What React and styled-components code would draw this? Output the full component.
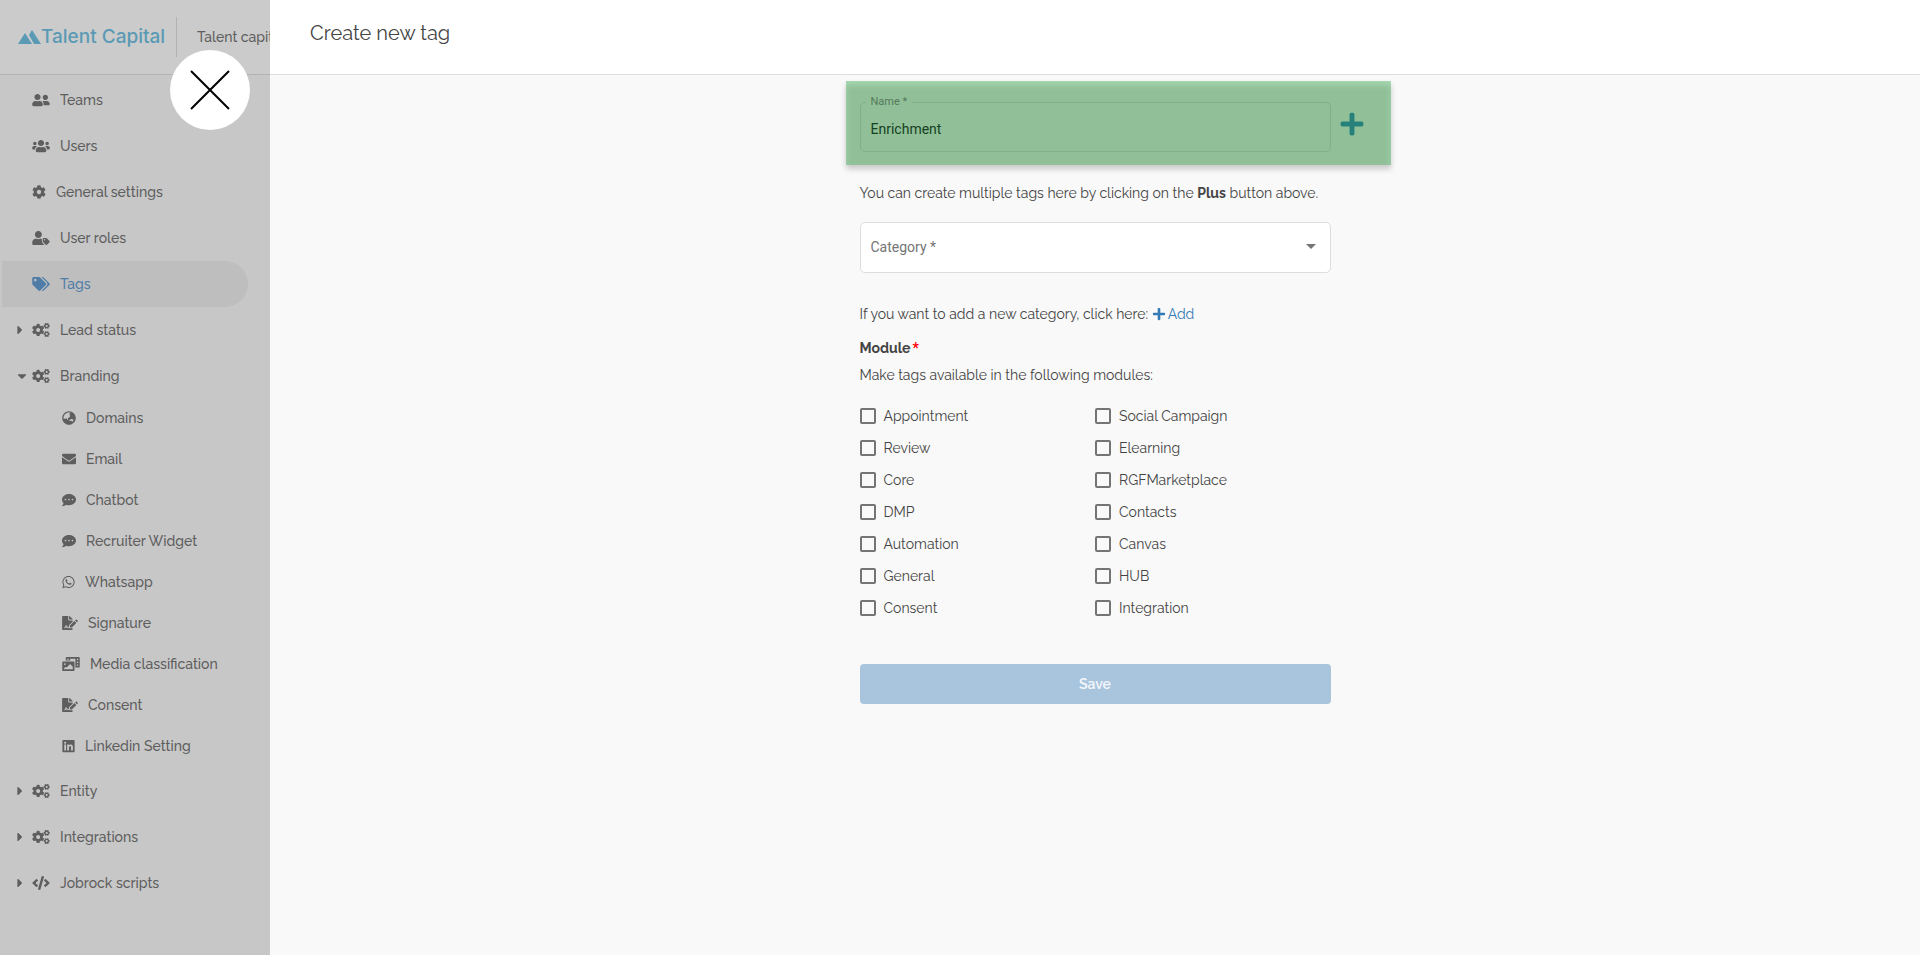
import React, { useState } from 'react';
import styled, { createGlobalStyle, css } from 'styled-components';
import {
	FaUserFriends, FaUsers, FaCog, FaUserTag, FaTags, FaCogs, FaEnvelope, FaCommentDots,
	FaWhatsapp, FaFileSignature, FaPhotoVideo, FaLinkedin, FaCode, FaGlobeAsia, FaPlus,
	FaCaretDown, FaCaretRight
} from 'react-icons/fa';

const GlobalStyle = createGlobalStyle`
	* {
		box-sizing: border-box;
	}
	body {
		margin: 0;
		background: #f9f9f9;
		color: #444;
		font-family: Raleway, Lato, sans-serif;
		font-size: 14px;
		line-height: 20px;
	}
	button, input, select {
		font: inherit;
	}
`;

const Page = styled.div`
	display: flex;
	min-height: 100vh;
`;

const Sidebar = styled.aside`
	position: relative;
	flex: 0 0 270px;
	min-width: 0;
	background: #c7c7c7;
	color: #5e5e5e;
	font-weight: 500;
`;

const TopBar = styled.div`
	display: flex;
	align-items: center;
	height: 75px;
	padding-left: 18px;
	overflow: hidden;
	white-space: nowrap;
	background: #cbcbcb;
	border-bottom: 1px solid #b3b3b3;
`;

const Logo = styled.a`
	display: flex;
	flex: none;
	align-items: center;
	width: 158px;
	color: #5a9ab5;
	font-family: Inter, sans-serif;
	font-size: 19px;
	font-weight: 500;
	text-decoration: none;
`;

const Account = styled.span`
	display: flex;
	flex: none;
	align-items: center;
	height: 40px;
	padding-left: 20px;
	border-left: 1px solid #b3b3b3;
`;

const CloseButton = styled.button`
	position: absolute;
	top: 50px;
	right: 20px;
	display: flex;
	align-items: center;
	justify-content: center;
	width: 80px;
	height: 80px;
	padding: 0;
	border: 0;
	border-radius: 50%;
	background: #fff;
	cursor: pointer;
`;

const Menu = styled.ul`
	margin: 0;
	padding: 2px 22px 0 2px;
	list-style: none;
`;

const SubMenu = styled.ul`
	margin: -2px 0 0;
	padding: 0 0 2px 60px;
	list-style: none;
`;

const MenuLink = styled.a`
	display: flex;
	align-items: center;
	height: ${({ $sub }) => ($sub ? 41 : 46)}px;
	padding-left: ${({ $sub }) => ($sub ? 0 : 15)}px;
	color: inherit;
	text-decoration: none;
	border-radius: 0 23px 23px 0;
	${({ $active }) => $active && css`
		background: #bebebe;
		color: #4f7da8;
	`}
`;

const Caret = styled.span`
	display: flex;
	width: 15px;
`;

const MenuIcon = styled.svg`
	flex: none;
	width: ${({ $width }) => $width}px;
	height: 14px;
`;

const Label = styled.span`
	margin-left: 10px;
`;

const Panel = styled.main`
	flex: 1;
	min-width: 0;
`;

const PanelHeader = styled.header`
	height: 75px;
	padding: 20px 40px;
	background: #fff;
	border-bottom: 1px solid #ddd;
`;

const Title = styled.h1`
	margin: 0;
	font-size: 20px;
	font-weight: 400;
	line-height: 26px;
`;

const Form = styled.form`
	width: 471px;
	margin: 6px auto 0;
`;

const Highlight = styled.div`
	display: flex;
	align-items: center;
	width: 545px;
	height: 84px;
	margin-left: -14px;
	padding: 2px 14px 0;
	background: #91c098;
	box-shadow: 0 4px 6px rgba(0, 0, 0, 0.2), inset 0 4px 6px -1px #aadcb5;
`;

const Field = styled.fieldset`
	flex: none;
	width: 471px;
	height: 56px;
	margin: 0;
	padding: 0 5px;
	border: 1px solid #82ae88;
	border-radius: 5px;
	font-family: Roboto, sans-serif;
`;

const FieldLegend = styled.legend`
	padding: 0 5px;
	color: #56785b;
	font-size: 11px;
	line-height: 12px;
`;

const NameInput = styled.input`
	display: block;
	width: 100%;
	height: 42px;
	padding: 0 5px;
	border: 0;
	outline: 0;
	background: transparent;
	color: #164022;
	font-size: 14px;
`;

const PlusButton = styled.button`
	display: flex;
	margin-left: 8px;
	padding: 0;
	border: 0;
	background: none;
	color: #26817a;
	font-size: 26px;
	cursor: pointer;
`;

const Hint = styled.p`
	margin: ${({ $top }) => $top || 0}px 0 0;
	white-space: nowrap;
`;

const SelectWrap = styled.div`
	position: relative;
	margin-top: 19px;
`;

const Select = styled.select`
	display: block;
	width: 100%;
	height: 51px;
	padding: 0 10px 2px;
	border: 1px solid #ddd;
	border-radius: 5px;
	appearance: none;
	background: #fff;
	color: #757575;
	font-family: Roboto, sans-serif;
	font-size: 14px;
`;

const SelectArrow = styled.svg`
	position: absolute;
	top: 22px;
	right: 15px;
	pointer-events: none;
`;

const AddLink = styled.a`
	color: #337ab7;
	text-decoration: none;

	svg {
		margin-right: 2px;
		vertical-align: -2px;
	}
`;

const ModuleTitle = styled.h2`
	margin: 14px 0 7px;
	font-size: 14px;
	font-weight: 700;
	line-height: 20px;
`;

const Required = styled.span`
	margin-left: 2px;
	color: #f00;
	font-family: Roboto, sans-serif;
`;

const Modules = styled.div`
	display: grid;
	grid-template-columns: 1fr 1fr;
	margin-top: 15px;
`;

const Check = styled.label`
	display: flex;
	align-items: center;
	gap: 8px;
	height: 32px;
`;

const CheckBox = styled.input`
	appearance: none;
	width: 16px;
	height: 16px;
	margin: 0;
	border: 2px solid #757575;
	border-radius: 2px;

	&:checked {
		background: #337ab7;
	}
`;

const SaveButton = styled.button`
	width: 100%;
	height: 40px;
	margin-top: 40px;
	border: 0;
	border-radius: 4px;
	background: #a9c5de;
	color: #f4f7fa;
	font-weight: 600;
`;

const menu = [
	{ label: 'Teams', icon: FaUserFriends, width: 18 },
	{ label: 'Users', icon: FaUsers, width: 18 },
	{ label: 'General settings', icon: FaCog, width: 14 },
	{ label: 'User roles', icon: FaUserTag, width: 18 },
	{ label: 'Tags', icon: FaTags, width: 18, active: true },
	{ label: 'Lead status', icon: FaCogs, width: 18, caret: 'right' },
	{
		label: 'Branding',
		icon: FaCogs,
		width: 18,
		caret: 'down',
		children: [
			{ label: 'Domains', icon: FaGlobeAsia, width: 14 },
			{ label: 'Email', icon: FaEnvelope, width: 14 },
			{ label: 'Chatbot', icon: FaCommentDots, width: 14 },
			{ label: 'Recruiter Widget', icon: FaCommentDots, width: 14 },
			{ label: 'Whatsapp', icon: FaWhatsapp, width: 13 },
			{ label: 'Signature', icon: FaFileSignature, width: 16 },
			{ label: 'Media classification', icon: FaPhotoVideo, width: 18 },
			{ label: 'Consent', icon: FaFileSignature, width: 16 },
			{ label: 'Linkedin Setting', icon: FaLinkedin, width: 13 }
		]
	},
	{ label: 'Entity', icon: FaCogs, width: 18, caret: 'right' },
	{ label: 'Integrations', icon: FaCogs, width: 18, caret: 'right' },
	{ label: 'Jobrock scripts', icon: FaCode, width: 18, caret: 'right' }
];

const modules = [
	'Appointment', 'Social Campaign', 'Review', 'Elearning', 'Core', 'RGFMarketplace', 'DMP',
	'Contacts', 'Automation', 'Canvas', 'General', 'HUB', 'Consent', 'Integration'
];

const MenuItem = ({ item, sub }) => (
	<li>
		<MenuLink href="#" $sub={sub} $active={item.active}>
			{!sub && (
				<Caret>
					{item.caret === 'right' && <MenuIcon as={FaCaretRight} $width={6} />}
					{item.caret === 'down' && <MenuIcon as={FaCaretDown} $width={10} />}
				</Caret>
			)}
			<MenuIcon as={item.icon} $width={item.width} />
			<Label>{item.label}</Label>
		</MenuLink>
		{item.children && (
			<SubMenu>
				{item.children.map(child => <MenuItem key={child.label} item={child} sub />)}
			</SubMenu>
		)}
	</li>
);

const App = () => {
	const [ name, setName ] = useState('Enrichment');

	return (
		<Page>
			<GlobalStyle />
			<Sidebar>
				<TopBar>
					<Logo href="#">
						<svg width="23" height="14" viewBox="0 0 23 14" fill="currentColor">
							<path d="M0 14 7 3l7 11zM11 5l3-5 9 14h-7z" />
						</svg>
						Talent Capital
					</Logo>
					<Account>Talent capital</Account>
				</TopBar>
				<Menu>
					{menu.map(item => <MenuItem key={item.label} item={item} />)}
				</Menu>
				<CloseButton type="button" aria-label="Close">
					<svg width="40" height="40" viewBox="0 0 40 40" stroke="#000" strokeWidth="2">
						<path d="M1 1 39 39M39 1 1 39" />
					</svg>
				</CloseButton>
			</Sidebar>
			<Panel>
				<PanelHeader>
					<Title>Create new tag</Title>
				</PanelHeader>
				<Form onSubmit={e => e.preventDefault()}>
					<Highlight>
						<Field>
							<FieldLegend><label htmlFor="name">Name *</label></FieldLegend>
							<NameInput id="name" value={name} onChange={e => setName(e.target.value)} />
						</Field>
						<PlusButton type="button" aria-label="Add tag"><FaPlus /></PlusButton>
					</Highlight>
					<Hint $top={18}>
						You can create multiple tags here by clicking on the <strong>Plus</strong> button above.
					</Hint>
					<SelectWrap>
						<Select aria-label="Category">
							<option>Category *</option>
						</Select>
						<SelectArrow width="10" height="5" viewBox="0 0 10 5" fill="#757575">
							<path d="M0 0h10L5 5z" />
						</SelectArrow>
					</SelectWrap>
					<Hint $top={31}>
						If you want to add a new category, click here: <AddLink href="#"><FaPlus size={14} />Add</AddLink>
					</Hint>
					<ModuleTitle>Module<Required>*</Required></ModuleTitle>
					<Hint>Make tags available in the following modules:</Hint>
					<Modules>
						{modules.map(label => (
							<Check key={label}>
								<CheckBox type="checkbox" />
								{label}
							</Check>
						))}
					</Modules>
					<SaveButton type="submit">Save</SaveButton>
				</Form>
			</Panel>
		</Page>
	);
};

export default App;
